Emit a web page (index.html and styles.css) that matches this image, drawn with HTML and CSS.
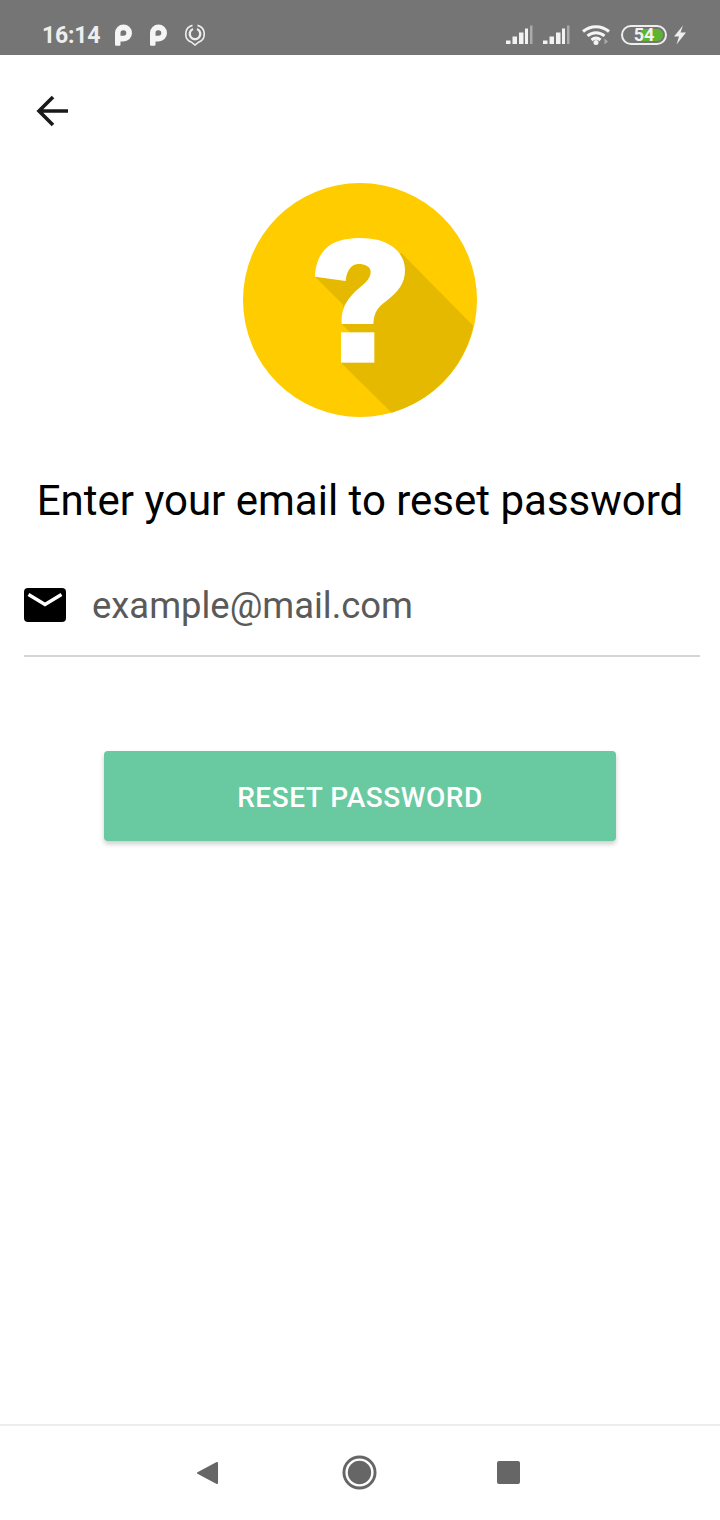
FILE: index.html
```html
<!DOCTYPE html>
<html lang="en">
<head>
<meta charset="utf-8">
<title>Reset password</title>
<link rel="stylesheet" href="styles.css">
</head>
<body>
<div class="screen">
  <header class="status">
    <div class="status-left">
      <span class="time">16:14</span>
      <svg class="p-icon" viewBox="0 0 18 22"><path fill-rule="evenodd" d="M1 20.500V9a8.500 8.500 0 1 1 8.500 8.500H6.500v3a1.200 1.200 0 0 1-1.200 1.200H2.200A1.200 1.200 0 0 1 1 20.500ZM9.500 6.200a2.800 2.800 0 0 0-3 2.800v2.800h3a2.800 2.800 0 0 0 0-5.600Z" fill="#f5f5f5"/></svg>
      <svg class="p-icon p-two" viewBox="0 0 18 22"><path fill-rule="evenodd" d="M1 20.500V9a8.500 8.500 0 1 1 8.500 8.500H6.500v3a1.200 1.200 0 0 1-1.200 1.200H2.200A1.200 1.200 0 0 1 1 20.500ZM9.500 6.200a2.800 2.800 0 0 0-3 2.800v2.800h3a2.800 2.800 0 0 0 0-5.600Z" fill="#f5f5f5"/></svg>
      <svg class="ring-icon" viewBox="0 0 20 22"><path d="M7.500 1.400A8.800 8.800 0 0 0 6.500 18.200L10 21l3.500-2.800A8.800 8.800 0 0 0 12.500 1.400" fill="none" stroke="#eee" stroke-width="1.600"/><path d="M8 5a5.300 5.300 0 1 0 4 0" fill="none" stroke="#eee" stroke-width="2.400"/></svg>
    </div>
    <div class="status-right">
      <svg class="signal" viewBox="0 0 27 20"><path d="M0 15.500h4.500V19H0zM6.500 11.500H11V19H6.500zM13 7.500h4.500V19H13zM19 3.500h3V19h-3z" fill="#f2f2f2"/><path d="M24 0.500h2.500V19H24z" fill="#aaa"/></svg>
      <svg class="signal signal-two" viewBox="0 0 27 20"><path d="M0 15.500h4.500V19H0zM6.500 11.500H11V19H6.500zM13 7.500h4.500V19H13zM19 3.500h3V19h-3z" fill="#f2f2f2"/><path d="M24 0.500h2.500V19H24z" fill="#aaa"/></svg>
      <svg class="wifi" viewBox="0 0 28 20"><g fill="none" stroke="#f5f5f5" stroke-width="3"><path d="M1 6.500c7.500-6.500 18.500-6.500 26 0"/><path d="M5.500 10.800c5-4.200 12-4.200 17 0"/><path d="M9.500 15c2.800-2.300 6.200-2.300 9 0"/></g><circle cx="14" cy="17.500" r="2.500" fill="#f5f5f5"/><path d="M22.500 13.500v6l3.500-3z" fill="#aaa"/></svg>
      <div class="battery"><span class="battery-fill"></span><span class="battery-num">54</span></div>
      <svg class="bolt" viewBox="0 0 14 20"><path d="M10 0.500 1 11.500h5l-2.500 8L13 7.500H7.500z" fill="#eee"/></svg>
    </div>
  </header>

  <main class="content">
    <button class="back" type="button" aria-label="Back">
      <svg viewBox="0 0 34 34"><path d="M33 17H4M18 3 4 17 18 31" fill="none" stroke="#1a1a1a" stroke-width="3.600"/></svg>
    </button>

    <svg class="hero" viewBox="0 0 780 780">
      <circle cx="390" cy="390" r="351" fill="#ffcc00"/>
      <path d="M515 250 730 468A351 351 0 0 1 485 728L333 578 360 487 335 462 340 405 255 320 390 280Z" fill="#e4b900"/>
      <path d="M255 320C256 275 275 240 305 222 335 204 395 198 445 210 495 224 525 258 525 300 525 340 505 365 470 392 445 410 432 425 430 462H335C333 420 345 395 375 365 400 342 422 330 422 305 422 290 405 282 385 282 365 282 350 300 347 333Z" fill="#fff"/>
      <rect x="333" y="487" width="100" height="91" fill="#fff"/>
    </svg>

    <h1 class="title">Enter your email to reset password</h1>

    <div class="field">
      <svg class="mail" viewBox="0 0 42 34"><rect width="42" height="34" y="0" rx="4" fill="#000"/><path d="M4.500 6.500 21 16.500l16.500-10" fill="none" stroke="#fff" stroke-width="3.400"/></svg>
      <span class="placeholder">example@mail.com</span>
    </div>

    <button class="submit" type="button"><span class="submit-label">RESET PASSWORD</span></button>
  </main>

  <footer class="nav">
    <svg class="nav-back" viewBox="0 0 24 26"><path d="M22 2.500v21L2 13z" fill="#666" stroke="#666" stroke-width="2" stroke-linejoin="round"/></svg>
    <svg class="nav-home" viewBox="0 0 36 36"><circle cx="18" cy="18" r="16" fill="none" stroke="#666" stroke-width="3"/><circle cx="18" cy="18" r="12" fill="#666"/></svg>
    <div class="nav-recent"></div>
  </footer>
</div>
</body>
</html>
```
FILE: styles.css
```css
* { box-sizing: border-box; }
html, body { margin: 0; padding: 0; }
body { background: #fff; font-family: Roboto, "Liberation Sans", sans-serif; }
.screen { width: 720px; height: 1520px; display: flex; flex-direction: column; background: #fff; }

.status { height: 55px; background: #757575; display: flex; justify-content: space-between; align-items: center; padding: 14px 33px 0 42px; flex: none; }
.status-left, .status-right { display: flex; align-items: center; }
.time { font-size: 23px; font-weight: 700; color: #eee; line-height: 28px; margin-top: 2px; letter-spacing: -.2px; }
.p-icon { width: 18px; height: 22px; margin-left: 14px; }
.p-two { margin-left: 17px; }
.ring-icon { width: 20px; height: 22px; margin-left: 18px; }
.signal { width: 27px; height: 20px; }
.signal-two { margin-left: 10px; }
.wifi { width: 28px; height: 20px; margin-left: 12px; }
.battery { position: relative; width: 46px; height: 20px; margin-left: 11px; border: 2px solid #eee; border-radius: 10px; display: flex; align-items: center; justify-content: center; }
.battery-fill { position: absolute; left: 18px; top: 2px; bottom: 2px; right: 2px; background: #5cb531; border-radius: 0 7px 7px 0; }
.battery-num { position: relative; font-size: 18px; font-weight: 700; color: #f2f2f2; line-height: 16px; }
.bolt { width: 14px; height: 20px; margin-left: 6px; }

.content { flex: 1; display: flex; flex-direction: column; align-items: center; }
.back { align-self: flex-start; width: 34px; height: 34px; margin: 39px 0 0 35px; padding: 0; border: 0; background: none; display: block; }
.back svg { display: block; width: 34px; height: 34px; }
.hero { display: block; width: 260px; height: 260px; margin-top: 42px; flex: none; }
.title { margin: 48px 0 0; font-size: 42px; font-weight: 400; line-height: 46px; color: #000; white-space: nowrap; }
.field { align-self: stretch; margin: 44px 20px 0 24px; height: 89px; display: flex; align-items: flex-start; border-bottom: 2px solid #d5d5d8; padding-top: 15px; }
.mail { width: 42px; height: 34px; margin-top: 5px; flex: none; }
.placeholder { font-size: 36.4px; line-height: 42px; margin-left: 26px; margin-top: 2px; color: #5a5a5a; }
.submit { width: 512px; height: 90px; margin-top: 94px; background: #69c9a1; border: 0; border-radius: 4px; box-shadow: 0 3px 5px rgba(0,0,0,.2); color: #fff; font: 500 28px Roboto, sans-serif; letter-spacing: .55px; padding: 2px 0 0; }

.nav { height: 96px; border-top: 2px solid #ececec; display: flex; align-items: center; justify-content: center; flex: none; padding: 0 4px 1px 0; }
.nav-back { width: 23px; height: 26px; }
.nav-home { width: 35px; height: 35px; margin-left: 123px; }
.nav-recent { width: 23px; height: 23px; background: #666; border-radius: 2px; margin-left: 120px; }
```
